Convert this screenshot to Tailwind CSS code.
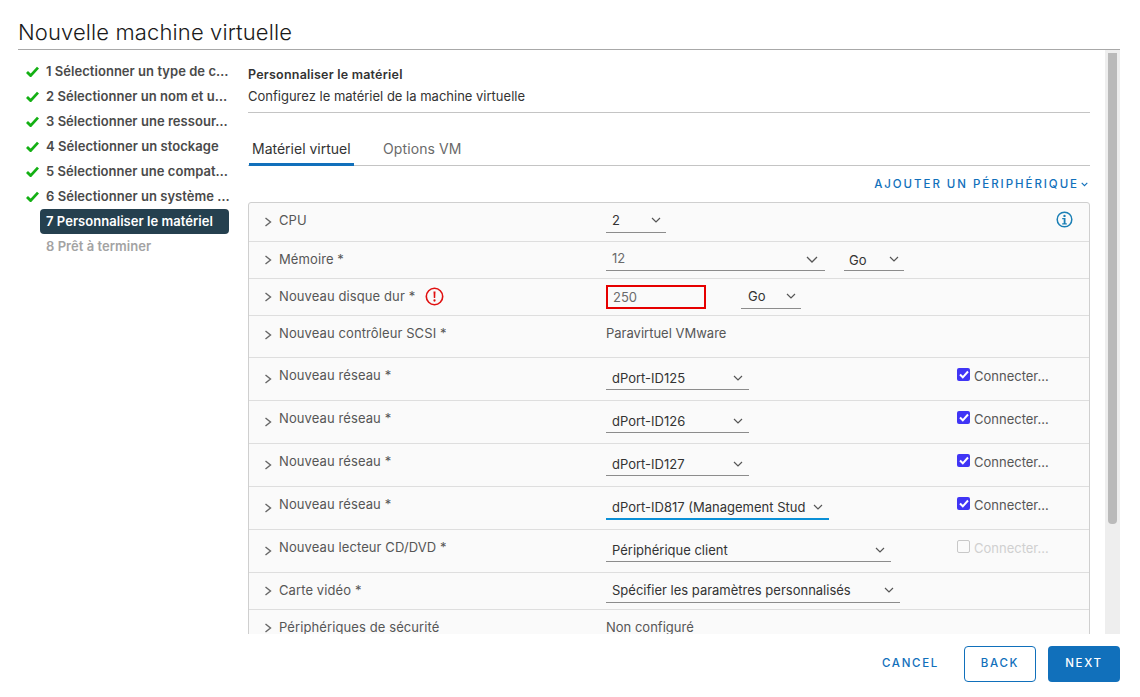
<!DOCTYPE html>
<html lang="fr">
<head>
  <meta charset="UTF-8">
  <title>Nouvelle machine virtuelle</title>
  <script src="https://cdn.jsdelivr.net/npm/@tailwindcss/browser@4"></script>
</head>
<body class="bg-white font-['Inter',sans-serif] text-[13px] text-[#565656] w-[1140px] h-[697px] overflow-hidden">

  <!-- Title -->
  <div class="ml-[18px] w-[1102px] h-[50px] border-b border-[#a8a8a8] pt-[17px]">
    <h1 class="text-[22px] leading-[30px] font-light tracking-[0.12px] text-[#1a1a1a]">Nouvelle machine virtuelle</h1>
  </div>

  <div class="flex h-[584px] overflow-hidden">
    <!-- Steps -->
    <nav class="w-[240px] shrink-0 pl-[26px] pt-[9px] font-semibold tracking-[0.04px] text-[#4a4a4a] whitespace-nowrap">
      <div class="flex items-center h-[25px]">
        <svg class="w-[13px] h-[11px] mr-[7px] shrink-0" viewBox="0 0 13 11"><path d="M1 6l3.600 3.600L12 1.600" fill="none" stroke="#14b014" stroke-width="2.800"/></svg>
        <span>1 Sélectionner un type de c…</span>
      </div>
      <div class="flex items-center h-[25px]">
        <svg class="w-[13px] h-[11px] mr-[7px] shrink-0" viewBox="0 0 13 11"><path d="M1 6l3.600 3.600L12 1.600" fill="none" stroke="#14b014" stroke-width="2.800"/></svg>
        <span>2 Sélectionner un nom et u…</span>
      </div>
      <div class="flex items-center h-[25px]">
        <svg class="w-[13px] h-[11px] mr-[7px] shrink-0" viewBox="0 0 13 11"><path d="M1 6l3.600 3.600L12 1.600" fill="none" stroke="#14b014" stroke-width="2.800"/></svg>
        <span>3 Sélectionner une ressour…</span>
      </div>
      <div class="flex items-center h-[25px]">
        <svg class="w-[13px] h-[11px] mr-[7px] shrink-0" viewBox="0 0 13 11"><path d="M1 6l3.600 3.600L12 1.600" fill="none" stroke="#14b014" stroke-width="2.800"/></svg>
        <span>4 Sélectionner un stockage</span>
      </div>
      <div class="flex items-center h-[25px]">
        <svg class="w-[13px] h-[11px] mr-[7px] shrink-0" viewBox="0 0 13 11"><path d="M1 6l3.600 3.600L12 1.600" fill="none" stroke="#14b014" stroke-width="2.800"/></svg>
        <span>5 Sélectionner une compat…</span>
      </div>
      <div class="flex items-center h-[25px]">
        <svg class="w-[13px] h-[11px] mr-[7px] shrink-0" viewBox="0 0 13 11"><path d="M1 6l3.600 3.600L12 1.600" fill="none" stroke="#14b014" stroke-width="2.800"/></svg>
        <span>6 Sélectionner un système …</span>
      </div>
      <div class="ml-[14px] w-[189px] h-[25px] leading-[25px] pl-[6px] rounded-[4px] bg-[#25404f] text-white">7 Personnaliser le matériel</div>
      <div class="ml-[20px] h-[25px] leading-[25px] text-[#a3a3a3]">8 Prêt à terminer</div>
    </nav>

    <!-- Main -->
    <main class="w-[842px] shrink-0 ml-[8px]">
      <div class="h-[63px] border-b border-[#c4c4c4] pt-[15px]">
        <div class="font-semibold leading-[20px] text-[12.500px] tracking-[0.22px] text-[#333]">Personnaliser le matériel</div>
        <div class="mt-[1px] leading-[20px] text-[#333]">Configurez le matériel de la machine virtuelle</div>
      </div>

      <!-- Tabs -->
      <div class="flex h-[53px] pt-[24px] border-b border-[#c4c4c4] text-[14px]">
        <div class="ml-px w-[105px] h-[29px] pl-[3px] leading-[23px] border-b-[3px] border-[#1170bb] text-[#333]">Matériel virtuel</div>
        <div class="ml-[29px] leading-[23px] tracking-[0.1px] text-[#6a6a6a]">Options VM</div>
      </div>

      <div class="flex justify-end items-center h-[36px] pt-[2px] pr-[2px] text-[#1170bb] text-[11.500px] font-medium tracking-[1.950px]">
        AJOUTER UN PÉRIPHÉRIQUE
        <svg class="w-[7px] h-[5px] ml-[2px] mb-[1px]" viewBox="0 0 7 5"><path d="M.7 .8L3.500 3.600 6.300 .8" fill="none" stroke="#1170bb" stroke-width="1.100"/></svg>
      </div>

      <!-- Hardware table -->
      <div class="border border-[#cfcfcf] rounded-t-[3px] bg-[#fafafa]">
        <div class="flex h-[39px] border-b border-[#dedede]">
          <div class="flex w-[357px] pt-[8px] tracking-[0.1px]">
            <svg class="w-[8px] h-[10px] mt-[6px] ml-[15px] mr-[7px] shrink-0" viewBox="0 0 8 10"><path d="M1.500 1l5 4-5 4" fill="none" stroke="#666" stroke-width="1.400"/></svg>
            <span class="leading-[19px]">CPU</span>
          </div>
          <div class="flex w-[60px] h-[30px] border-b border-[#8c8c8c] items-end pb-[2px] justify-between pl-[6px] pr-[5px] text-[#333]">
            <span class="leading-[19px]">2</span>
            <svg class="w-[10px] h-[6px] mb-[7px]" viewBox="0 0 10 6"><path d="M1 1l4 4 4-4" fill="none" stroke="#565656" stroke-width="1.200"/></svg>
          </div>
          <svg class="w-[17px] h-[17px] mt-[8px] ml-[390px]" viewBox="0 0 17 17"><circle cx="8.500" cy="8.500" r="7.300" fill="none" stroke="#1a7fb5" stroke-width="1.500"/><circle cx="8.500" cy="4.900" r="1.200" fill="#1a7fb5"/><path d="M6.200 7.100h3.300v5.100h1.300v1.200H6.200v-1.200h1.500V8.300H6.200z" fill="#1a7fb5"/></svg>
        </div>

        <div class="flex h-[37px] border-b border-[#dedede]">
          <div class="flex w-[357px] pt-[8px] tracking-[0.1px]">
            <svg class="w-[8px] h-[10px] mt-[5px] ml-[15px] mr-[7px] shrink-0" viewBox="0 0 8 10"><path d="M1.500 1l5 4-5 4" fill="none" stroke="#666" stroke-width="1.400"/></svg>
            <span class="leading-[19px]">Mémoire *</span>
          </div>
          <div class="flex w-[219px] h-[29px] border-b border-[#8c8c8c] pl-[6px] pr-[7px] pt-[7px] justify-between">
            <span class="leading-[19px] text-[#6a6a6a]">12</span>
            <svg class="w-[12px] h-[7px] mt-[7px]" viewBox="0 0 12 7"><path d="M1 1l5 5 5-5" fill="none" stroke="#565656" stroke-width="1.300"/></svg>
          </div>
          <div class="flex w-[60px] h-[29px] ml-[19px] border-b border-[#8c8c8c] pl-[5px] pr-[5px] pt-[9px] justify-between text-[#333]">
            <span class="leading-[19px]">Go</span>
            <svg class="w-[10px] h-[6px] mt-[5px]" viewBox="0 0 10 6"><path d="M1 1l4 4 4-4" fill="none" stroke="#565656" stroke-width="1.200"/></svg>
          </div>
        </div>

        <div class="flex h-[37px] border-b border-[#dedede]">
          <div class="flex w-[357px] pt-[8px] tracking-[0.1px]">
            <svg class="w-[8px] h-[10px] mt-[5px] ml-[15px] mr-[7px] shrink-0" viewBox="0 0 8 10"><path d="M1.500 1l5 4-5 4" fill="none" stroke="#666" stroke-width="1.400"/></svg>
            <span class="leading-[19px]">Nouveau disque dur *</span>
            <svg class="w-[19px] h-[19px] ml-[10px]" viewBox="0 0 19 19"><circle cx="9.500" cy="9.500" r="8.200" fill="none" stroke="#e01010" stroke-width="1.600"/><path d="M8.500 4.500h2l-.3 6.500h-1.400z" fill="#e01010"/><circle cx="9.500" cy="13.500" r="1.150" fill="#e01010"/></svg>
          </div>
          <div class="w-[100px] h-[24px] mt-[6px] border-2 border-[#e60000] pl-[5px] leading-[20px] text-[#6a6a6a]">250</div>
          <div class="flex w-[60px] h-[30px] ml-[35px] border-b border-[#8c8c8c] pl-[7px] pr-[5px] pt-[8px] justify-between text-[#333]">
            <span class="leading-[19px]">Go</span>
            <svg class="w-[10px] h-[6px] mt-[6px]" viewBox="0 0 10 6"><path d="M1 1l4 4 4-4" fill="none" stroke="#565656" stroke-width="1.200"/></svg>
          </div>
        </div>

        <div class="flex h-[42px] border-b border-[#dedede]">
          <div class="flex w-[357px] pt-[8px] tracking-[0.1px]">
            <svg class="w-[8px] h-[10px] mt-[6px] ml-[15px] mr-[7px] shrink-0" viewBox="0 0 8 10"><path d="M1.500 1l5 4-5 4" fill="none" stroke="#666" stroke-width="1.400"/></svg>
            <span class="leading-[19px]">Nouveau contrôleur SCSI *</span>
          </div>
          <span class="pt-[8px] leading-[19px]">Paravirtuel VMware</span>
        </div>

        <div class="flex h-[43px] border-b border-[#dedede]">
          <div class="flex w-[357px] pt-[8px] tracking-[0.1px]">
            <svg class="w-[8px] h-[10px] mt-[8px] ml-[15px] mr-[7px] shrink-0" viewBox="0 0 8 10"><path d="M1.500 1l5 4-5 4" fill="none" stroke="#666" stroke-width="1.400"/></svg>
            <span class="leading-[19px]">Nouveau réseau *</span>
          </div>
          <div class="flex w-[143px] h-[32px] border-b border-[#8c8c8c] pl-[6px] pr-[6px] pt-[11px] justify-between text-[#333]">
            <span class="leading-[19px]">dPort-ID125</span>
            <svg class="w-[10px] h-[6px] mt-[6px]" viewBox="0 0 10 6"><path d="M1 1l4 4 4-4" fill="none" stroke="#565656" stroke-width="1.200"/></svg>
          </div>
          <div class="flex ml-[208px] pt-[7px]">
            <div class="flex items-center justify-center w-[13px] h-[13px] mt-[3px] mr-[4px] rounded-[2px] bg-[#4035f5]"><svg class="w-[10px] h-[9px]" viewBox="0 0 10 9"><path d="M1 4.500l2.800 2.800L9 1.500" fill="none" stroke="#fff" stroke-width="2"/></svg></div>
            <span class="mt-[2px] leading-[19px]">Connecter…</span>
          </div>
        </div>

        <div class="flex h-[43px] border-b border-[#dedede]">
          <div class="flex w-[357px] pt-[8px] tracking-[0.1px]">
            <svg class="w-[8px] h-[10px] mt-[8px] ml-[15px] mr-[7px] shrink-0" viewBox="0 0 8 10"><path d="M1.500 1l5 4-5 4" fill="none" stroke="#666" stroke-width="1.400"/></svg>
            <span class="leading-[19px]">Nouveau réseau *</span>
          </div>
          <div class="flex w-[143px] h-[32px] border-b border-[#8c8c8c] pl-[6px] pr-[6px] pt-[11px] justify-between text-[#333]">
            <span class="leading-[19px]">dPort-ID126</span>
            <svg class="w-[10px] h-[6px] mt-[6px]" viewBox="0 0 10 6"><path d="M1 1l4 4 4-4" fill="none" stroke="#565656" stroke-width="1.200"/></svg>
          </div>
          <div class="flex ml-[208px] pt-[7px]">
            <div class="flex items-center justify-center w-[13px] h-[13px] mt-[3px] mr-[4px] rounded-[2px] bg-[#4035f5]"><svg class="w-[10px] h-[9px]" viewBox="0 0 10 9"><path d="M1 4.500l2.800 2.800L9 1.500" fill="none" stroke="#fff" stroke-width="2"/></svg></div>
            <span class="mt-[2px] leading-[19px]">Connecter…</span>
          </div>
        </div>

        <div class="flex h-[43px] border-b border-[#dedede]">
          <div class="flex w-[357px] pt-[8px] tracking-[0.1px]">
            <svg class="w-[8px] h-[10px] mt-[8px] ml-[15px] mr-[7px] shrink-0" viewBox="0 0 8 10"><path d="M1.500 1l5 4-5 4" fill="none" stroke="#666" stroke-width="1.400"/></svg>
            <span class="leading-[19px]">Nouveau réseau *</span>
          </div>
          <div class="flex w-[143px] h-[32px] border-b border-[#8c8c8c] pl-[6px] pr-[6px] pt-[11px] justify-between text-[#333]">
            <span class="leading-[19px]">dPort-ID127</span>
            <svg class="w-[10px] h-[6px] mt-[6px]" viewBox="0 0 10 6"><path d="M1 1l4 4 4-4" fill="none" stroke="#565656" stroke-width="1.200"/></svg>
          </div>
          <div class="flex ml-[208px] pt-[7px]">
            <div class="flex items-center justify-center w-[13px] h-[13px] mt-[3px] mr-[4px] rounded-[2px] bg-[#4035f5]"><svg class="w-[10px] h-[9px]" viewBox="0 0 10 9"><path d="M1 4.500l2.800 2.800L9 1.500" fill="none" stroke="#fff" stroke-width="2"/></svg></div>
            <span class="mt-[2px] leading-[19px]">Connecter…</span>
          </div>
        </div>

        <div class="flex h-[43px] border-b border-[#dedede]">
          <div class="flex w-[357px] pt-[8px] tracking-[0.1px]">
            <svg class="w-[8px] h-[10px] mt-[8px] ml-[15px] mr-[7px] shrink-0" viewBox="0 0 8 10"><path d="M1.500 1l5 4-5 4" fill="none" stroke="#666" stroke-width="1.400"/></svg>
            <span class="leading-[19px]">Nouveau réseau *</span>
          </div>
          <div class="flex w-[223px] h-[33px] border-b-2 border-[#0a8fd6] pl-[6px] pr-[6px] pt-[11px] justify-between text-[#333]">
            <span class="leading-[19px] whitespace-nowrap">dPort-ID817 (Management Stud</span>
            <svg class="w-[10px] h-[6px] mt-[6px]" viewBox="0 0 10 6"><path d="M1 1l4 4 4-4" fill="none" stroke="#565656" stroke-width="1.200"/></svg>
          </div>
          <div class="flex ml-[128px] pt-[7px]">
            <div class="flex items-center justify-center w-[13px] h-[13px] mt-[3px] mr-[4px] rounded-[2px] bg-[#4035f5]"><svg class="w-[10px] h-[9px]" viewBox="0 0 10 9"><path d="M1 4.500l2.800 2.800L9 1.500" fill="none" stroke="#fff" stroke-width="2"/></svg></div>
            <span class="mt-[2px] leading-[19px]">Connecter…</span>
          </div>
        </div>

        <div class="flex h-[43px] border-b border-[#dedede]">
          <div class="flex w-[357px] pt-[8px] tracking-[0.1px]">
            <svg class="w-[8px] h-[10px] mt-[8px] ml-[15px] mr-[7px] shrink-0" viewBox="0 0 8 10"><path d="M1.500 1l5 4-5 4" fill="none" stroke="#666" stroke-width="1.400"/></svg>
            <span class="leading-[19px]">Nouveau lecteur CD/DVD *</span>
          </div>
          <div class="flex w-[285px] h-[32px] border-b border-[#8c8c8c] pl-[6px] pr-[6px] pt-[11px] justify-between text-[#333]">
            <span class="leading-[19px]">Périphérique client</span>
            <svg class="w-[10px] h-[6px] mt-[6px]" viewBox="0 0 10 6"><path d="M1 1l4 4 4-4" fill="none" stroke="#565656" stroke-width="1.200"/></svg>
          </div>
          <div class="flex ml-[66px] pt-[7px] text-[#d0d0d0]">
            <div class="w-[13px] h-[13px] mt-[3px] mr-[4px] rounded-[2px] border border-[#c8c8c8]"></div>
            <span class="mt-[2px] leading-[19px]">Connecter…</span>
          </div>
        </div>

        <div class="flex h-[37px] border-b border-[#dedede]">
          <div class="flex w-[357px] pt-[8px] tracking-[0.1px]">
            <svg class="w-[8px] h-[10px] mt-[5px] ml-[15px] mr-[7px] shrink-0" viewBox="0 0 8 10"><path d="M1.500 1l5 4-5 4" fill="none" stroke="#666" stroke-width="1.400"/></svg>
            <span class="leading-[19px]">Carte vidéo *</span>
          </div>
          <div class="flex w-[294px] h-[30px] border-b border-[#8c8c8c] pl-[6px] pr-[6px] pt-[8px] justify-between text-[#333]">
            <span class="leading-[19px]">Spécifier les paramètres personnalisés</span>
            <svg class="w-[10px] h-[6px] mt-[6px]" viewBox="0 0 10 6"><path d="M1 1l4 4 4-4" fill="none" stroke="#565656" stroke-width="1.200"/></svg>
          </div>
        </div>

        <div class="flex h-[37px]">
          <div class="flex w-[357px] pt-[8px] tracking-[0.1px]">
            <svg class="w-[8px] h-[10px] mt-[5px] ml-[15px] mr-[7px] shrink-0" viewBox="0 0 8 10"><path d="M1.500 1l5 4-5 4" fill="none" stroke="#666" stroke-width="1.400"/></svg>
            <span class="leading-[19px]">Périphériques de sécurité</span>
          </div>
          <span class="pt-[8px] leading-[19px]">Non configuré</span>
        </div>
      </div>
    </main>

    <!-- Scrollbar -->
    <div class="w-[15px] ml-[15px] shrink-0 bg-[#eeeeee] pl-[3px] pt-[3px]">
      <div class="w-[9px] h-[471px] rounded-b-[4px] bg-[#bababa]"></div>
    </div>
  </div>

  <!-- Footer -->
  <div class="flex justify-end items-start w-[1120px] pt-[12px] text-[11.500px] font-medium tracking-[1.700px]">
    <button class="h-[36px] text-[#1170bb] mr-[25px]">CANCEL</button>
    <button class="w-[72px] h-[36px] border border-[#1170bb] rounded-[4px] text-[#1170bb] mr-[12px]">BACK</button>
    <button class="w-[72px] h-[36px] rounded-[4px] bg-[#1170bb] text-white">NEXT</button>
  </div>
</body>
</html>
